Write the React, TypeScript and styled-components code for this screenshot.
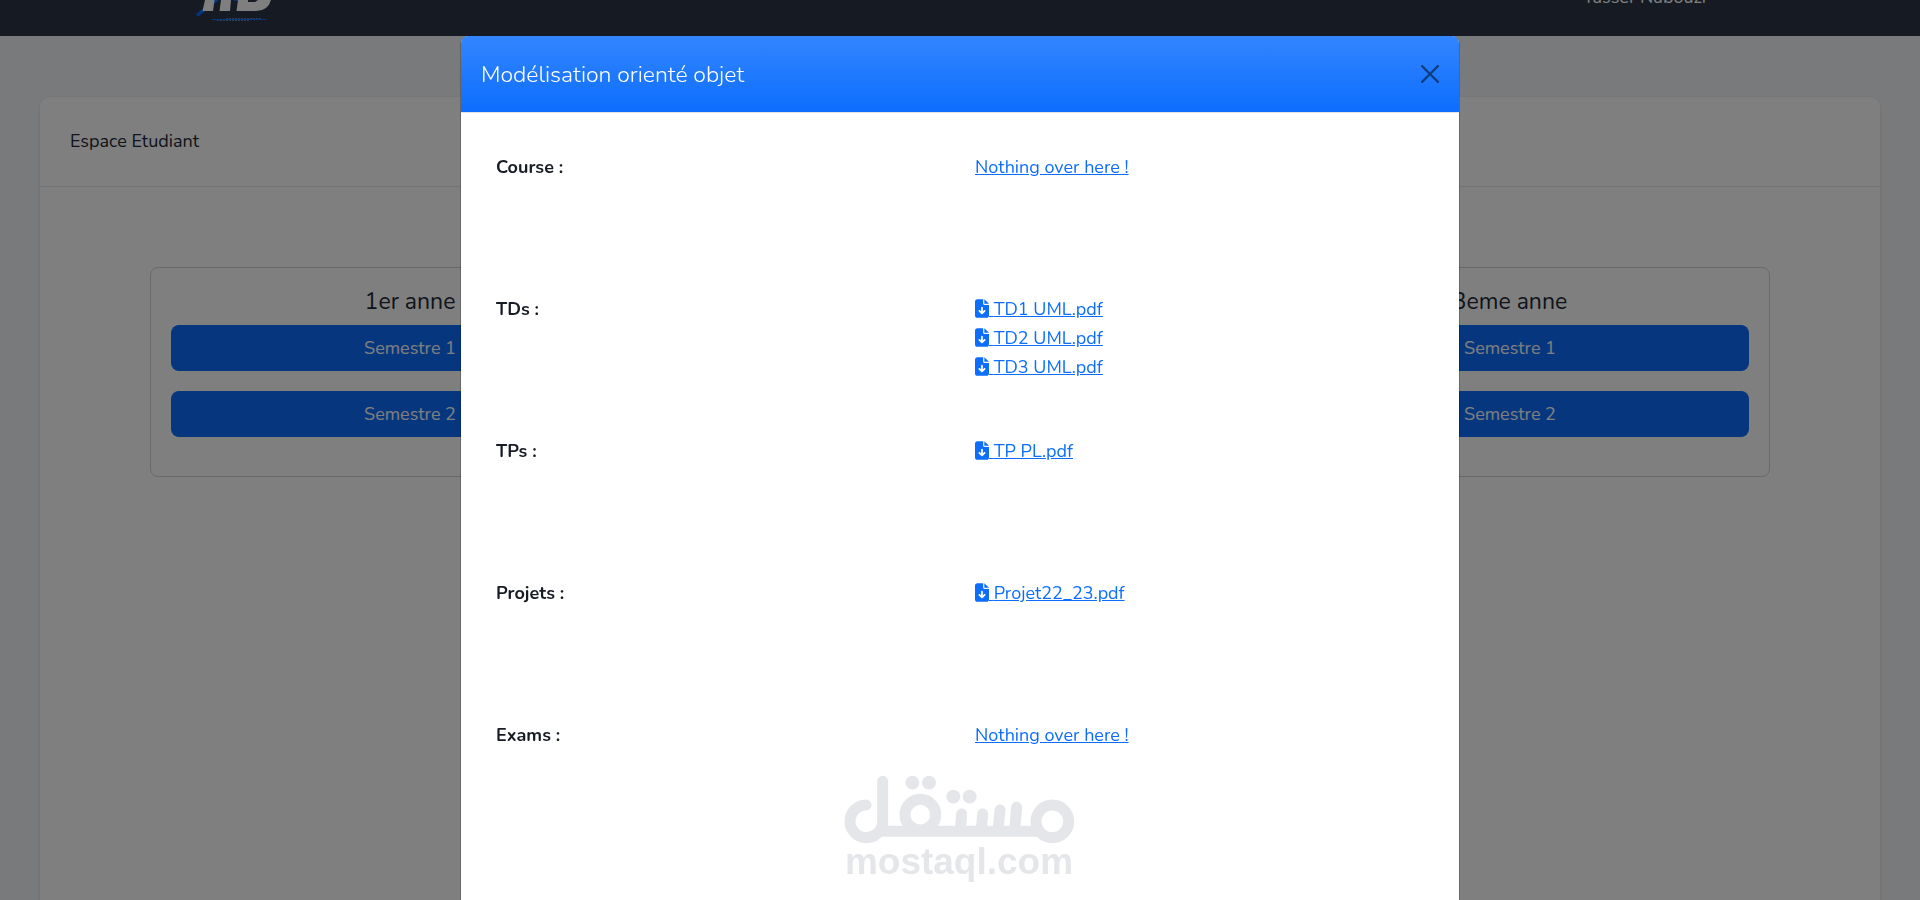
import React from "react";
import styled, { createGlobalStyle } from "styled-components";

const Global = createGlobalStyle`
  *, *::before, *::after { box-sizing: border-box; }
  body {
    margin: 0;
    height: 100vh;
    overflow: hidden;
    background: #f3f4f6;
    color: #212936;
    font-family: Nunito, Lato, "Open Sans", sans-serif;
    font-size: 18px;
    line-height: 29px;
  }
  h1, h2, h3, p, ul { margin: 0; padding: 0; font-weight: 400; }
`;

const TopBar = styled.header`
  display: flex;
  justify-content: space-between;
  align-items: flex-end;
  height: 36px;
  padding: 0 214px 0 190px;
  overflow: hidden;
  background: #2d3544;
  color: #fff;
`;

const UserMenu = styled.button`
  border: 0;
  padding: 0 0 24px;
  background: none;
  color: inherit;
  font: inherit;
`;

const Card = styled.main`
  margin: 61px 40px 0;
  min-height: 100vh;
  border-radius: 10px;
  background: #fff;
  box-shadow: 0 1px 3px rgba(0, 0, 0, 0.12);
`;

const CardHeader = styled.div`
  padding: 30px;
  border-bottom: 1px solid #e5e7eb;
`;

const CardTitle = styled.h1`
  font-size: 18px;
  line-height: 29px;
`;

const Years = styled.div`
  display: grid;
  grid-template-columns: repeat(3, 1fr);
  gap: 30px;
  padding: 80px 110px;
`;

const Year = styled.section`
  display: flex;
  flex-direction: column;
  gap: 20px;
  padding: 20px 20px 39px;
  border: 1px solid #cfd2d6;
  border-radius: 8px;
`;

const YearTitle = styled.h2`
  margin-bottom: -10px;
  font-size: 23px;
  line-height: 27px;
  text-align: center;
`;

const Semester = styled.button`
  height: 46px;
  border: 0;
  border-radius: 8px;
  background: #0d6efd;
  color: #fff;
  font: inherit;
`;

const Backdrop = styled.div`
  position: fixed;
  inset: 0;
  display: flex;
  justify-content: center;
  align-items: flex-start;
  padding-top: 36px;
  overflow: hidden;
  background: rgba(0, 0, 0, 0.5);
`;

const Dialog = styled.div`
  width: 100%;
  max-width: 1000px;
  min-height: 100vh;
  border: 1px solid rgba(0, 0, 0, 0.2);
  border-top: 0;
  border-radius: 8px 8px 0 0;
  background: #fff;
  background-clip: padding-box;
  color: #161b24;
`;

const DialogHeader = styled.div`
  display: flex;
  justify-content: space-between;
  align-items: center;
  height: 77px;
  padding: 0 20px;
  border-bottom: 1px solid #dee2e6;
  border-radius: 7px 7px 0 0;
  background: linear-gradient(#3385ff, #0d6efd) padding-box;
`;

const DialogTitle = styled.h2`
  padding-top: 2px;
  color: #fff;
  font-size: 23px;
  font-weight: 300;
  line-height: 34px;
`;

const CloseButton = styled.button`
  display: flex;
  border: 0;
  padding: 0;
  background: none;
  opacity: 0.5;
`;

const DialogBody = styled.div`
  padding: 40px 20px;
`;

const Resource = styled.section`
  display: grid;
  grid-template-columns: 1fr 1fr;
  min-height: 142px;
`;

const ResourceLabel = styled.h3`
  padding: 0 15px;
  font-size: 18px;
  font-weight: 700;
  line-height: 29px;
`;

const Files = styled.ul`
  padding: 0 15px;
  list-style: none;
`;

const FileLink = styled.a`
  color: #0d6efd;
  text-decoration: underline;

  svg {
    vertical-align: -3px;
  }
`;

const Watermark = styled.div`
  position: fixed;
  left: 50%;
  top: 775px;
  width: 230px;
  margin-left: -116px;
  color: #e4e6ea;
  font: 700 37px/35px "Liberation Sans", Arial, sans-serif;
  text-align: center;
  pointer-events: none;

  svg { display: block; }
`;

const Logo = () => (
  <svg width="90" height="36" viewBox="0 0 90 36" aria-hidden="true">
    <path d="M7 15.500 30-3" stroke="#0d6efd" strokeWidth="3.500" />
    <path d="M44 0h5" stroke="#0d6efd" strokeWidth="2" />
    <path d="M15 0H24.500L23 11H12.500ZM31 0H41L40 11H29.500ZM48 0H58V2H65L68 0H81Q78 11 66 11H46.500Z" fill="#fff" />
    <path d="M22 19.500H76" stroke="#0d6efd" />
    <path d="M27 20.500H60M36 18.500H71" stroke="#5b7fae" strokeDasharray="2 1" />
  </svg>
);

const FileIcon = () => (
  <svg width="14" height="19" viewBox="0 0 384 512" aria-hidden="true">
    <path
      fill="currentColor"
      d="M64 0C28.700 0 0 28.700 0 64v384c0 35.300 28.700 64 64 64h256c35.300 0 64-28.700 64-64V160H256c-17.700 0-32-14.300-32-32V0H64zm192 0v128h128L256 0zM216 232v102.100l31-31c9.400-9.400 24.600-9.400 33.900 0s9.400 24.600 0 33.900l-72 72c-9.400 9.400-24.600 9.400-33.900 0l-72-72c-9.400-9.400-9.400-24.600 0-33.900s24.600-9.400 33.900 0l31 31V232c0-13.300 10.700-24 24-24s24 10.700 24 24z"
    />
  </svg>
);

const CloseIcon = () => (
  <svg width="18" height="18" viewBox="0 0 16 16" aria-hidden="true">
    <path
      fill="#000"
      d="M.293.293a1 1 0 0 1 1.414 0L8 6.586 14.293.293a1 1 0 1 1 1.414 1.414L9.414 8l6.293 6.293a1 1 0 0 1-1.414 1.414L8 9.414l-6.293 6.293a1 1 0 0 1-1.414-1.414L6.586 8 .293 1.707a1 1 0 0 1 0-1.414z"
    />
  </svg>
);

const WatermarkMark = () => (
  <svg width="230" height="69" viewBox="75 76 690 207" aria-hidden="true">
    <g fill="none" stroke="currentColor" strokeWidth="33" strokeLinecap="round">
      <path d="M141 166A49 49 0 1 0 191 216V95" />
      <path d="M185 244.500H660" strokeLinecap="butt" />
      <circle cx="304" cy="195" r="46" />
      <circle cx="700" cy="215" r="49" />
      <path d="M428 193 424 240M491 193 487 240M543 181 537 240M593 173 587 240" />
    </g>
    <g fill="currentColor">
      <circle cx="280" cy="99" r="21" />
      <circle cx="330" cy="99" r="21" />
      <circle cx="403" cy="141" r="21" />
      <circle cx="452" cy="141" r="21" />
    </g>
  </svg>
);

const years = ["1er anne", "2eme anne", "3eme anne"];

const resources: { label: string; files: string[] }[] = [
  { label: "Course :", files: [] },
  { label: "TDs :", files: ["TD1 UML.pdf", "TD2 UML.pdf", "TD3 UML.pdf"] },
  { label: "TPs :", files: ["TP PL.pdf"] },
  { label: "Projets :", files: ["Projet22_23.pdf"] },
  { label: "Exams :", files: [] },
];

export default function App() {
  return (
    <>
      <Global />
      <TopBar>
        <Logo />
        <UserMenu type="button">Yasser Nabouzi</UserMenu>
      </TopBar>
      <Card>
        <CardHeader>
          <CardTitle>Espace Etudiant</CardTitle>
        </CardHeader>
        <Years>
          {years.map((year) => (
            <Year key={year}>
              <YearTitle>{year}</YearTitle>
              <Semester type="button">Semestre 1</Semester>
              <Semester type="button">Semestre 2</Semester>
            </Year>
          ))}
        </Years>
      </Card>
      <Backdrop>
        <Dialog role="dialog" aria-modal="true" aria-labelledby="dialog-title">
          <DialogHeader>
            <DialogTitle id="dialog-title">Modélisation orienté objet</DialogTitle>
            <CloseButton type="button" aria-label="Close">
              <CloseIcon />
            </CloseButton>
          </DialogHeader>
          <DialogBody>
            {resources.map(({ label, files }) => (
              <Resource key={label}>
                <ResourceLabel>{label}</ResourceLabel>
                <Files>
                  {files.length === 0 && (
                    <li>
                      <FileLink href="#">Nothing over here !</FileLink>
                    </li>
                  )}
                  {files.map((file) => (
                    <li key={file}>
                      <FileLink href="#">
                        <FileIcon /> {file}
                      </FileLink>
                    </li>
                  ))}
                </Files>
              </Resource>
            ))}
          </DialogBody>
        </Dialog>
      </Backdrop>
      <Watermark>
        <WatermarkMark />
        mostaql.com
      </Watermark>
    </>
  );
}
